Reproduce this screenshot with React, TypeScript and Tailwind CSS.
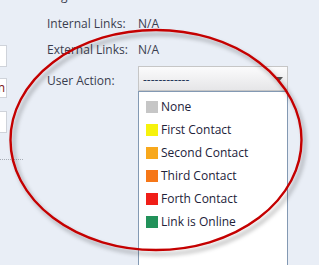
import React from "react";

interface ActionOption {
  label: string;
  color: string;
}

const options: ActionOption[] = [
  { label: "None", color: "#c6c6c6" },
  { label: "First Contact", color: "#f6f20c" },
  { label: "Second Contact", color: "#f8a81c" },
  { label: "Third Contact", color: "#f67718" },
  { label: "Forth Contact", color: "#f01e18" },
  { label: "Link is Online", color: "#22925a" },
];

function InfoRow({ label, value }: { label: string; value: string }) {
  return (
    <div className="flex shrink-0 h-[26px] leading-[26px] whitespace-nowrap">
      <span className="w-[91px] shrink-0">{label}</span>
      <span>{value}</span>
    </div>
  );
}

export default function App() {
  return (
    <div className="relative w-[319px] h-[265px] overflow-hidden bg-[#e9eef6] font-['Open_Sans',sans-serif] text-[12px] text-[#3a3d4e] flex items-start">
      {/* clipped inputs from the neighbouring column */}
      <div className="w-[8px] shrink-0 flex flex-col">
        <div className="mt-[45px] h-[22px] -ml-[20px] w-[27px] bg-white border border-[#cfd3da]" />
        <div className="mt-[11px] h-[20px] -ml-[20px] w-[27px] bg-white border border-[#cfd3da] flex items-center justify-end pr-[1px] text-[#7a1010] leading-none overflow-hidden">
          n
        </div>
        <div className="mt-[13px] h-[22px] -ml-[20px] w-[27px] bg-white border border-[#cfd3da]" />
        <div className="mt-[26px] w-[23px] border-t border-dotted border-[#a8adb5]" />
      </div>

      <div className="ml-[39px] -mt-[17px] flex flex-col shrink-0">
        {/* row above, scrolled mostly out of view */}
        <div className="flex shrink-0 h-[28px] leading-[25px] whitespace-nowrap">
          <span className="w-[91px] shrink-0">Page Rank:</span>
          <span>-/-</span>
        </div>
        <InfoRow label="Internal Links:" value="N/A" />
        <InfoRow label="External Links:" value="N/A" />

        <div className="mt-[3px] flex shrink-0">
          <span className="w-[91px] shrink-0 leading-[25px] h-[25px] pt-[2px]">User Action:</span>
          <div className="flex flex-col w-[150px]">
            <div className="h-[25px] shrink-0 border border-[#c6c6c6] bg-gradient-to-b from-[#fbfbfc] to-[#e6e6e8] flex items-center pl-[4px] pr-[4px]">
              <span className="flex-1 text-[#1f3558] leading-none pt-[2px]">------------</span>
              <svg width="7" height="4" viewBox="0 0 7 4">
                <path d="M0 0H7L3.5 4Z" fill="#555" />
              </svg>
            </div>
            <div className="h-[200px] shrink-0 bg-white border border-[#8399b3] pt-[3px] pl-[7px]">
              {options.map((o) => (
                <div key={o.label} className="h-[23px] flex items-center gap-[3px] text-[#22223a]">
                  <span className="w-[12px] h-[12px] shrink-0" style={{ backgroundColor: o.color }} />
                  <span className="leading-none">{o.label}</span>
                </div>
              ))}
            </div>
          </div>
        </div>
      </div>

      {/* highlight ellipse drawn over the panel */}
      <svg className="absolute inset-0 pointer-events-none" width="319" height="265" viewBox="0 0 319 265">
        <defs>
          <filter id="shadow" x="-10%" y="-10%" width="120%" height="130%">
            <feDropShadow dx="3" dy="4" stdDeviation="2.2" floodColor="#000" floodOpacity="0.35" />
          </filter>
        </defs>
        <ellipse cx="156" cy="140" rx="145.5" ry="110" fill="none" stroke="#c40000" strokeWidth="2.4" filter="url(#shadow)" />
      </svg>
    </div>
  );
}
